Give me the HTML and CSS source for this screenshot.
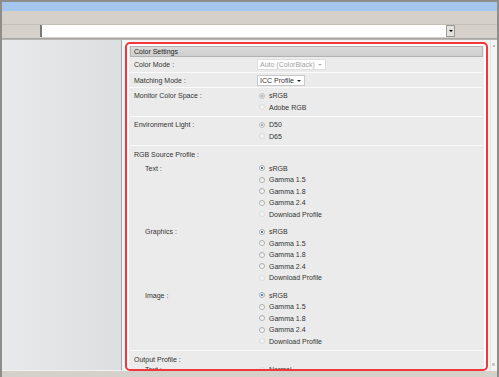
FILE: index.html
```html
<!DOCTYPE html>
<html lang="en">
  <head>
    <meta charset="UTF-8" />
    <title>Color Settings</title>
    <link rel="stylesheet" href="styles.css">
  </head>
  <body>
    <div class="window">
      <div class="titlebar"></div>
      <div class="toolbar"></div>
      <div class="addressbar">
        <div class="address-field"><span class="address-arrow"></span></div>
      </div>

      <div class="main">
        <div class="sidebar"></div>

        <div class="content">
          <div class="panel">
            <div class="panel-inner">
              <div class="section-title">Color Settings</div>

              <div class="row row-first">
                <div class="label">Color Mode :</div>
                <div class="value">
                  <span class="select disabled">Auto (ColorBlack)<span class="caret"></span></span>
                </div>
              </div>

              <div class="row row-second">
                <div class="label">Matching Mode :</div>
                <div class="value">
                  <span class="select">ICC Profile<span class="caret"></span></span>
                </div>
              </div>

              <div class="row">
                <div class="label">Monitor Color Space :</div>
                <div class="value">
                  <div class="option"><span class="radio checked disabled"></span>sRGB</div>
                  <div class="option"><span class="radio disabled"></span>Adobe RGB</div>
                </div>
              </div>

              <div class="row">
                <div class="label">Environment Light :</div>
                <div class="value">
                  <div class="option"><span class="radio checked disabled"></span>D50</div>
                  <div class="option"><span class="radio disabled"></span>D65</div>
                </div>
              </div>

              <div class="row row-group">
                <div class="group-title">RGB Source Profile :</div>

                <div class="sub-row">
                  <div class="sub-label">Text :</div>
                  <div class="value">
                    <div class="option"><span class="radio checked"></span>sRGB</div>
                    <div class="option"><span class="radio"></span>Gamma 1.5</div>
                    <div class="option"><span class="radio"></span>Gamma 1.8</div>
                    <div class="option"><span class="radio"></span>Gamma 2.4</div>
                    <div class="option"><span class="radio disabled"></span>Download Profile</div>
                  </div>
                </div>

                <div class="sub-row">
                  <div class="sub-label">Graphics :</div>
                  <div class="value">
                    <div class="option"><span class="radio checked"></span>sRGB</div>
                    <div class="option"><span class="radio"></span>Gamma 1.5</div>
                    <div class="option"><span class="radio"></span>Gamma 1.8</div>
                    <div class="option"><span class="radio"></span>Gamma 2.4</div>
                    <div class="option"><span class="radio disabled"></span>Download Profile</div>
                  </div>
                </div>

                <div class="sub-row">
                  <div class="sub-label">Image :</div>
                  <div class="value">
                    <div class="option"><span class="radio checked"></span>sRGB</div>
                    <div class="option"><span class="radio"></span>Gamma 1.5</div>
                    <div class="option"><span class="radio"></span>Gamma 1.8</div>
                    <div class="option"><span class="radio"></span>Gamma 2.4</div>
                    <div class="option"><span class="radio disabled"></span>Download Profile</div>
                  </div>
                </div>
              </div>

              <div class="row row-group">
                <div class="group-title">Output Profile :</div>
                <div class="sub-row sub-row-tight">
                  <div class="sub-label">Text :</div>
                  <div class="value">
                    <div class="option"><span class="radio disabled"></span>Normal</div>
                  </div>
                </div>
              </div>
            </div>
          </div>
        </div>

        <div class="scrollbar">
          <span class="scroll-up"></span>
          <span class="scroll-grip"></span>
        </div>
      </div>

      <div class="statusbar"></div>
    </div>
  </body>
</html>
```

FILE: styles.css
```css
* {
  margin: 0;
  padding: 0;
  box-sizing: border-box;
}

body {
  font-family: "Liberation Sans", Arial, sans-serif;
  font-size: 7px;
  color: #333;
  background: #d5d1ca;
}

.window {
  width: 499px;
  height: 377px;
  border: 2px solid #8e8d89;
  border-bottom: none;
  background: #d5d1ca;
  display: flex;
  flex-direction: column;
  overflow: hidden;
}

.titlebar {
  height: 9px;
  background: #a5c7ed;
}

.toolbar {
  height: 13px;
  background: #d5d1ca;
}

.addressbar {
  height: 15px;
  border-top: 1px solid #c4c0b9;
  border-bottom: 1px solid #a9a7a3;
  padding: 0 0 0 38px;
  display: flex;
  align-items: flex-start;
}

.address-field {
  width: 415px;
  height: 12px;
  background: #fff;
  border-left: 2px solid #7b7a76;
  position: relative;
}

.address-arrow {
  position: absolute;
  right: 0;
  top: 0;
  width: 9px;
  height: 12px;
  background: #e4e2dd;
  border: 1px solid #9c9a95;
}

.address-arrow::after {
  content: "";
  position: absolute;
  left: 2px;
  top: 4px;
  border-left: 2px solid transparent;
  border-right: 2px solid transparent;
  border-top: 2px solid #000;
}

.main {
  height: 332px;
  display: flex;
  border-top: 1px solid #b8b6b1;
}

.sidebar {
  width: 120px;
  background: linear-gradient(90deg, #e7e9ea, #dcdfe0);
  border-right: 1px solid #a9a9a8;
  border-bottom: 1px solid #f2f2f2;
}

.content {
  width: 368px;
  background: #f4f4f4;
  padding: 2px 2px 0 3px;
}

.panel {
  height: 329px;
  border: 2px solid #f3363a;
  border-radius: 5px;
  background: #fff;
  padding: 2px 2px 0 2px;
  overflow: hidden;
}

.panel-inner {
  background: #ebebeb;
  padding: 0 1px;
  min-height: 100%;
}

.section-title {
  height: 11px;
  line-height: 9px;
  padding-left: 3px;
  border: 1px solid #b3b3b3;
  background: linear-gradient(#dadada, #cfcfcf);
  color: #222;
}

.row {
  display: grid;
  grid-template-columns: 127px 1fr;
  padding: 2px 0 3px;
  border-bottom: 1px solid #fafafa;
}

.row-first {
  padding: 2px 0 2px;
}

.row-second {
  padding: 2px 0 1px;
}

.label {
  padding-left: 4px;
  line-height: 11.5px;
}

.row-first .label,
.row-second .label {
  line-height: 11px;
}

.select {
  display: inline-flex;
  align-items: center;
  height: 11px;
  padding: 0 10px 0 2px;
  background: #fff;
  border: 1px solid #c9c9c9;
  position: relative;
}

.select.disabled {
  color: #a3a3a3;
  border-color: #dedede;
}

.caret {
  position: absolute;
  right: 3px;
  top: 4px;
  border-left: 2px solid transparent;
  border-right: 2px solid transparent;
  border-top: 2px solid #222;
}

.select.disabled .caret {
  border-top-color: #b4b4b4;
}

.option {
  height: 11.5px;
  line-height: 11.5px;
  display: flex;
  align-items: center;
}

.radio {
  width: 6px;
  height: 6px;
  margin: 0 4px 0 2px;
  border-radius: 50%;
  border: 1px solid #aeb0b2;
  background: linear-gradient(#e6e6e6, #fdfdfd);
  position: relative;
}

.radio.disabled {
  border-color: #dcdcdc;
  background: #f3f3f3;
}

.radio.checked::after {
  content: "";
  position: absolute;
  left: 1px;
  top: 1px;
  width: 2px;
  height: 2px;
  border-radius: 50%;
  background: #2f6391;
}

.radio.checked.disabled {
  border-color: #c4c4c4;
  background: #e4e4e4;
}

.radio.checked.disabled::after {
  background: #a6a6a6;
}

.row-group {
  display: block;
  padding-top: 3px;
}

.group-title {
  padding-left: 4px;
  line-height: 11.5px;
  height: 11.5px;
}

.sub-row {
  display: grid;
  grid-template-columns: 127px 1fr;
  margin-top: 6px;
}

.group-title + .sub-row {
  margin-top: 2px;
}

.group-title + .sub-row-tight {
  margin-top: -1.5px;
}

.sub-label {
  padding-left: 15px;
  line-height: 11.5px;
}

.scrollbar {
  width: 7px;
  background: #f4f4f4;
  border-left: 1px solid #e2e2e2;
  position: relative;
}

.scroll-up {
  position: absolute;
  left: 2px;
  top: 5px;
  width: 2px;
  height: 2px;
  background: #b9b9b9;
}

.scroll-grip {
  position: absolute;
  left: 1px;
  bottom: 5px;
  width: 3px;
  height: 3px;
  background: #c9c9c9;
}

.statusbar {
  flex: 1;
  background: #d5d1ca;
}
```
